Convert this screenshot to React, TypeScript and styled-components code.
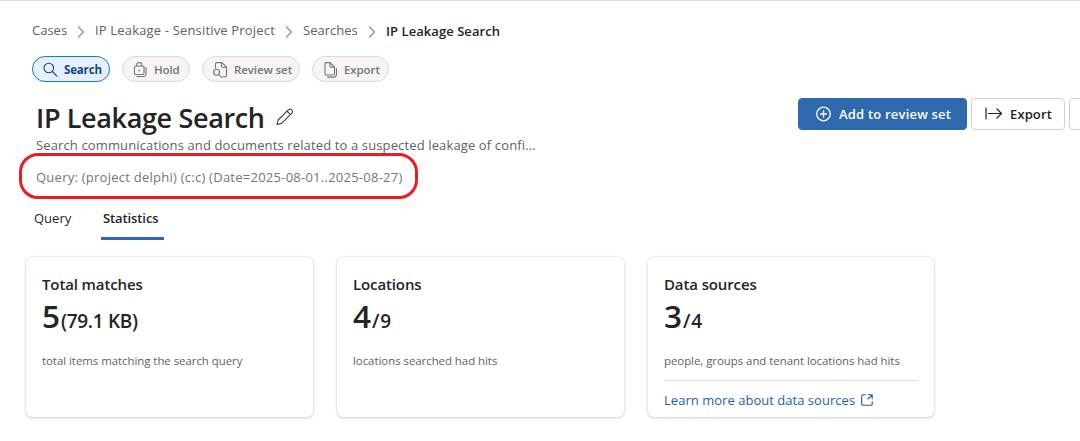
import React from 'react';
import styled, { createGlobalStyle, css } from 'styled-components';

const GlobalStyle = createGlobalStyle`
  * { box-sizing: border-box; }
  html, body { margin: 0; padding: 0; background: #fff; overflow: hidden; }
  body { font-family: "Open Sans", "Noto Sans", sans-serif; color: #242424; }
  svg { display: block; flex: none; }
  button { font-family: inherit; margin: 0; padding: 0; background: none; border: 0; }
`;

const Page = styled.main`
  width: 1080px;
  height: 441px;
  overflow: hidden;
  border-top: 1px solid #e3dfe1;
  white-space: nowrap;
`;

const Breadcrumb = styled.nav`
  display: flex;
  align-items: center;
  height: 20px;
  margin: 19px 0 0 32px;
`;

const Crumb = styled.a<{ $width: number; $spacing?: number; $current?: boolean }>`
  width: ${(p) => p.$width}px;
  font-size: 13px;
  line-height: 20px;
  letter-spacing: ${(p) => p.$spacing ?? 0}px;
  color: #616161;
  ${(p) => p.$current && css`
    padding-top: 1px;
    font-weight: 600;
    color: #242424;
  `}
`;

const Separator = styled.span`
  display: flex;
  justify-content: center;
  width: 28px;
  padding-top: 4px;
`;

const Steps = styled.div`
  display: flex;
  gap: 12px;
  margin: 16px 0 0 32px;
`;

const Pill = styled.button<{ $width: number; $active?: boolean }>`
  display: flex;
  align-items: center;
  gap: 6px;
  width: ${(p) => p.$width}px;
  height: 26px;
  padding: 1px 0 0 9px;
  border: 1px solid ${(p) => (p.$active ? '#0f7bd4' : '#dedadc')};
  border-radius: 13px;
  background: ${(p) => (p.$active ? '#e6effc' : '#f7f3f6')};
  color: ${(p) => (p.$active ? '#0f4a80' : '#787476')};
  font-size: 11.5px;
  font-weight: ${(p) => (p.$active ? 700 : 600)};
  letter-spacing: ${(p) => (p.$active ? -0.15 : -0.1)}px;
`;

const Header = styled.header`
  display: flex;
  justify-content: space-between;
  align-items: flex-start;
  height: 120px;
  padding: 16px 0 0 36px;
`;

const TitleRow = styled.div`
  display: flex;
  align-items: center;
  gap: 11px;
  height: 40px;
`;

const Title = styled.h1`
  margin: 0;
  width: 229px;
  font-size: 27px;
  line-height: 40px;
  font-weight: 600;
  letter-spacing: -0.36px;
`;

const Description = styled.p`
  margin: -2px 0 0;
  height: 18px;
  font-size: 13px;
  line-height: 18px;
  letter-spacing: 0.13px;
  color: #616161;
`;

const QueryHighlight = styled.div`
  display: flex;
  align-items: center;
  width: 399px;
  height: 46px;
  margin: -1px 0 0 -17px;
  padding: 2px 0 0 14px;
  border: 3px solid #eb1c24;
  border-radius: 19px;
  font-size: 13px;
  letter-spacing: 0.25px;
  color: #757575;
`;

const Actions = styled.div`
  display: flex;
  gap: 4px;
  width: 282px;
  overflow: hidden;
`;

const ActionButton = styled.button<{ $width: number; $primary?: boolean }>`
  display: flex;
  flex: none;
  align-items: center;
  gap: ${(p) => (p.$primary ? 6 : 7)}px;
  width: ${(p) => p.$width}px;
  height: 32px;
  padding-left: ${(p) => (p.$primary ? 16 : 12)}px;
  border: 1px solid ${(p) => (p.$primary ? '#2f69ad' : '#d1d1d1')};
  border-radius: 4px;
  background: ${(p) => (p.$primary ? '#2f69ad' : '#fff')};
  color: ${(p) => (p.$primary ? '#fff' : '#242424')};
  font-size: 13px;
  font-weight: 600;
  letter-spacing: ${(p) => (p.$primary ? 0.2 : 0.12)}px;
`;

const Tabs = styled.div`
  display: flex;
  gap: 24px;
  height: 38px;
  margin-left: 27px;
`;

const Tab = styled.button<{ $width: number; $pad: number; $active?: boolean }>`
  width: ${(p) => p.$width}px;
  height: 38px;
  padding: 0 0 4px ${(p) => p.$pad}px;
  border-bottom: 3px solid ${(p) => (p.$active ? '#2f69ad' : 'transparent')};
  text-align: left;
  font-size: 13px;
  font-weight: ${(p) => (p.$active ? 600 : 400)};
  letter-spacing: ${(p) => (p.$active ? -0.1 : 0)}px;
  color: #242424;
`;

const Cards = styled.section`
  display: flex;
  gap: 24px;
  margin: 17px 0 0 26px;
`;

const Card = styled.article`
  width: 287px;
  height: 160px;
  padding: 15px 17px 0 16px;
  border-radius: 6px;
  box-shadow: 0 0 2px rgba(40, 20, 30, 0.16), 0 1px 3px rgba(40, 20, 30, 0.18);

  &:last-child {
    width: 286px;
    padding-right: 16px;
  }
`;

const CardTitle = styled.h2`
  margin: 0;
  font-size: 15px;
  line-height: 24px;
  font-weight: 600;
  letter-spacing: -0.12px;
`;

const Figure = styled.div`
  display: flex;
  align-items: baseline;
  gap: 1px;
  height: 40px;
  line-height: 40px;
`;

const Value = styled.span`
  font-size: 31.5px;
  font-weight: 600;
`;

const Detail = styled.span<{ $spacing?: number }>`
  font-size: 19px;
  font-weight: 600;
  letter-spacing: ${(p) => p.$spacing ?? 0}px;
`;

const Caption = styled.p`
  margin: 15px 0 0;
  font-size: 11.4px;
  line-height: 20px;
  letter-spacing: -0.02px;
  color: #616161;
`;

const CardLink = styled.a`
  display: flex;
  align-items: center;
  gap: 6px;
  margin-top: 9px;
  padding-top: 9px;
  border-top: 1px solid #e0e0e0;
  font-size: 13px;
  line-height: 20px;
  letter-spacing: 0.03px;
  color: #1f5fa8;
`;

const Chevron = () => (
  <svg width="8" height="12" viewBox="0 0 8 12" fill="none" stroke="#8a8a8a" strokeWidth="1.1">
    <path d="M1 .5 6.5 6 1 11.5" />
  </svg>
);

const SearchIcon = () => (
  <svg width="16" height="16" viewBox="0 0 16 16" fill="none" stroke="currentColor" strokeWidth="1.1" strokeLinecap="round">
    <circle cx="6.8" cy="6" r="4.8" />
    <path d="m10.4 9.5 4.5 4.7" />
  </svg>
);

const LockIcon = () => (
  <svg width="16" height="16" viewBox="0 0 16 16" fill="none" stroke="currentColor" strokeWidth="1.1" strokeLinecap="round">
    <rect x="2.5" y="4" width="9.5" height="8.5" rx="1.2" />
    <path d="M4.800 4V2.600a2 2 0 0 1 2-2h1a2 2 0 0 1 2 2V4" />
    <path d="M14 5.500v6.700a2.300 2.300 0 0 1-2.300 2.300H4.800" />
    <circle cx="7.3" cy="8.3" r=".9" fill="currentColor" stroke="none" />
  </svg>
);

const ReviewIcon = () => (
  <svg width="16" height="16" viewBox="0 0 16 16" fill="none" stroke="currentColor" strokeWidth="1.1" strokeLinecap="round" strokeLinejoin="round">
    <path d="M3.500 6V1.900A1.300 1.300 0 0 1 4.800.6H10L14.500 5v8.400a1.300 1.300 0 0 1-1.300 1.300H10.500" />
    <path d="M9.500.6V4a1.200 1.200 0 0 0 1.200 1.200h3.800" />
    <circle cx="4.6" cy="10.3" r="3" />
    <path d="m6.800 12.500 2.700 3" />
  </svg>
);

const PagesIcon = () => (
  <svg width="16" height="16" viewBox="0 0 16 16" fill="none" stroke="currentColor" strokeWidth="1.1" strokeLinecap="round" strokeLinejoin="round">
    <path d="M4.300.6H8l4.500 4.500v6.700a1.200 1.200 0 0 1-1.200 1.200h-7a1.300 1.300 0 0 1-1.300-1.300V1.900A1.300 1.300 0 0 1 4.300.6Z" />
    <path d="M8 .6v3.300a1.200 1.200 0 0 0 1.200 1.200h3.300" />
    <path d="M14.500 6.500v6a2.600 2.600 0 0 1-2.600 2.600H5.500" />
  </svg>
);

const PencilIcon = () => (
  <svg width="18" height="20" viewBox="0 0 18 20" fill="none" stroke="#424242" strokeWidth="1.1" strokeLinejoin="round">
    <path d="M1 16.500 2.200 12 12.500 1.700a2 2 0 0 1 2.900 0l.5.5a2 2 0 0 1 0 2.900L5.600 15.400Z" />
    <path d="m11 3.200 3.400 3.400" />
  </svg>
);

const AddIcon = () => (
  <svg width="18" height="18" viewBox="0 0 18 18" fill="none" stroke="currentColor" strokeWidth="1.3" strokeLinecap="round">
    <circle cx="8.5" cy="9" r="6.8" />
    <path d="M8.500 6v6M5.500 9h6" />
  </svg>
);

const ExportIcon = () => (
  <svg width="19" height="16" viewBox="0 0 19 16" fill="none" stroke="currentColor" strokeWidth="1.2" strokeLinecap="round" strokeLinejoin="round">
    <path d="M2 2v11M4.500 7.500h13M13 3 17.500 7.500 13 12" />
  </svg>
);

const OpenIcon = () => (
  <svg width="12" height="12" viewBox="0 0 12 12" fill="none" stroke="currentColor" strokeWidth="1.1" strokeLinecap="round" strokeLinejoin="round">
    <path d="M4.500.8H2A1.300 1.300 0 0 0 .7 2.100v7.900a1.300 1.300 0 0 0 1.300 1.300h7.900a1.300 1.300 0 0 0 1.300-1.300V7.500M7.200.8h4v4M11.200.8 7 5" />
  </svg>
);

export default function App() {
  return (
    <Page>
      <GlobalStyle />
      <Breadcrumb>
        <Crumb $width={35}>Cases</Crumb>
        <Separator><Chevron /></Separator>
        <Crumb $width={180} $spacing={0.17}>IP Leakage - Sensitive Project</Crumb>
        <Separator><Chevron /></Separator>
        <Crumb $width={55}>Searches</Crumb>
        <Separator><Chevron /></Separator>
        <Crumb $width={115} $spacing={0.06} $current>IP Leakage Search</Crumb>
      </Breadcrumb>
      <Steps>
        <Pill $width={78} $active><SearchIcon />Search</Pill>
        <Pill $width={68}><LockIcon />Hold</Pill>
        <Pill $width={98}><ReviewIcon />Review set</Pill>
        <Pill $width={77}><PagesIcon />Export</Pill>
      </Steps>
      <Header>
        <div>
          <TitleRow>
            <Title>IP Leakage Search</Title>
            <PencilIcon />
          </TitleRow>
          <Description>Search communications and documents related to a suspected leakage of confi...</Description>
          <QueryHighlight>Query: (project delphi) (c:c) (Date=2025-08-01..2025-08-27)</QueryHighlight>
        </div>
        <Actions>
          <ActionButton $width={169} $primary><AddIcon />Add to review set</ActionButton>
          <ActionButton $width={94}><ExportIcon />Export</ActionButton>
          <ActionButton $width={94} aria-label="More" />
        </Actions>
      </Header>
      <Tabs>
        <Tab $width={50} $pad={7}>Query</Tab>
        <Tab $width={63} $pad={2} $active>Statistics</Tab>
      </Tabs>
      <Cards>
        <Card>
          <CardTitle>Total matches</CardTitle>
          <Figure><Value>5</Value><Detail $spacing={-0.3}>(79.1 KB)</Detail></Figure>
          <Caption>total items matching the search query</Caption>
        </Card>
        <Card>
          <CardTitle>Locations</CardTitle>
          <Figure><Value>4</Value><Detail $spacing={0.8}>/9</Detail></Figure>
          <Caption>locations searched had hits</Caption>
        </Card>
        <Card>
          <CardTitle>Data sources</CardTitle>
          <Figure><Value>3</Value><Detail $spacing={0.8}>/4</Detail></Figure>
          <Caption>people, groups and tenant locations had hits</Caption>
          <CardLink>Learn more about data sources<OpenIcon /></CardLink>
        </Card>
      </Cards>
    </Page>
  );
}
